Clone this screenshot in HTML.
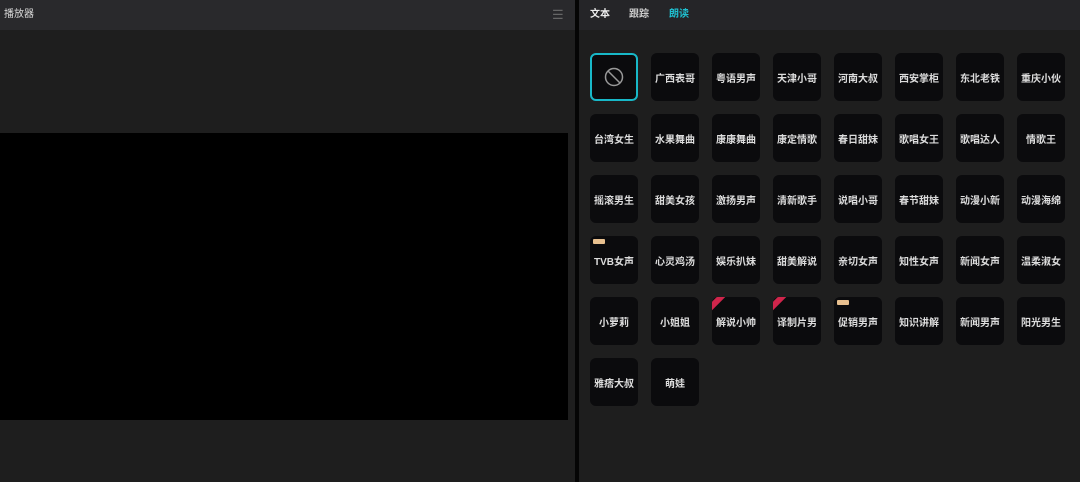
<!DOCTYPE html><html><head><meta charset="utf-8"><style>
body{margin:0;width:1080px;height:482px;background:#1e1e1e;position:relative;overflow:hidden;font-family:"Liberation Sans","Noto Sans CJK SC",sans-serif;}
.lh{position:absolute;left:0;top:0;width:575px;height:30px;background:#29292c;color:#ddd;font-size:10px;line-height:30px;}
.vid{position:absolute;left:0;top:133px;width:568px;height:287px;background:#000;}
.div{position:absolute;left:575px;top:0;width:4px;height:482px;background:#050505;}
.rh{position:absolute;left:579px;top:0;width:501px;height:30px;background:#252528;font-size:10px;line-height:30px;font-weight:bold;}
.t{position:absolute;width:48px;height:48px;background:#0b0b0d;border-radius:6px;color:#ddd;font-size:10px;font-weight:bold;display:flex;align-items:center;justify-content:center;white-space:nowrap;overflow:hidden;}
.vip{position:absolute;left:3px;top:3px;width:12px;height:5px;background:#e8c08f;border-radius:1px;}
.nw{position:absolute;left:-8px;top:1px;width:26px;height:6px;background:#d0254b;transform:rotate(-45deg);}
</style></head><body>
<div class="lh"><span style="margin-left:4px">播放器</span><span style="position:absolute;left:552px;top:0;color:#666;font-size:13px">☰</span></div>
<div class="vid"></div>
<div class="div"></div>
<div class="rh"><span style="position:absolute;left:11px;color:#eee">文本</span><span style="position:absolute;left:50px;color:#ccc">跟踪</span><span style="position:absolute;left:90px;color:#1fbfcf">朗读</span></div>
<div class="t" style="left:590px;top:53px;border:2px solid #18b8c8;width:44px;height:44px"><svg width="20" height="20" viewBox="0 0 20 20"><circle cx="10" cy="10" r="8.5" fill="none" stroke="#999" stroke-width="1.5"/><line x1="4" y1="4" x2="16" y2="16" stroke="#999" stroke-width="1.5"/></svg></div>
<div id="g"></div>
<script>
var n=["","广西表哥","粤语男声","天津小哥","河南大叔","西安掌柜","东北老铁","重庆小伙","台湾女生","水果舞曲","康康舞曲","康定情歌","春日甜妹","歌唱女王","歌唱达人","情歌王","摇滚男生","甜美女孩","激扬男声","清新歌手","说唱小哥","春节甜妹","动漫小新","动漫海绵","TVB女声","心灵鸡汤","娱乐扒妹","甜美解说","亲切女声","知性女声","新闻女声","温柔淑女","小萝莉","小姐姐","解说小帅","译制片男","促销男声","知识讲解","新闻男声","阳光男生","雅痞大叔","萌娃"];
var h="";for(var i=1;i<n.length;i++){var x=590+(i%8)*61,y=53+Math.floor(i/8)*61;var b="";if(i==24||i==36)b='<div class="vip"></div>';if(i==34||i==35)b='<div class="nw"></div>';h+='<div class="t" style="left:'+x+'px;top:'+y+'px">'+b+n[i]+'</div>';}
document.getElementById("g").innerHTML=h;
</script>
</body></html>
